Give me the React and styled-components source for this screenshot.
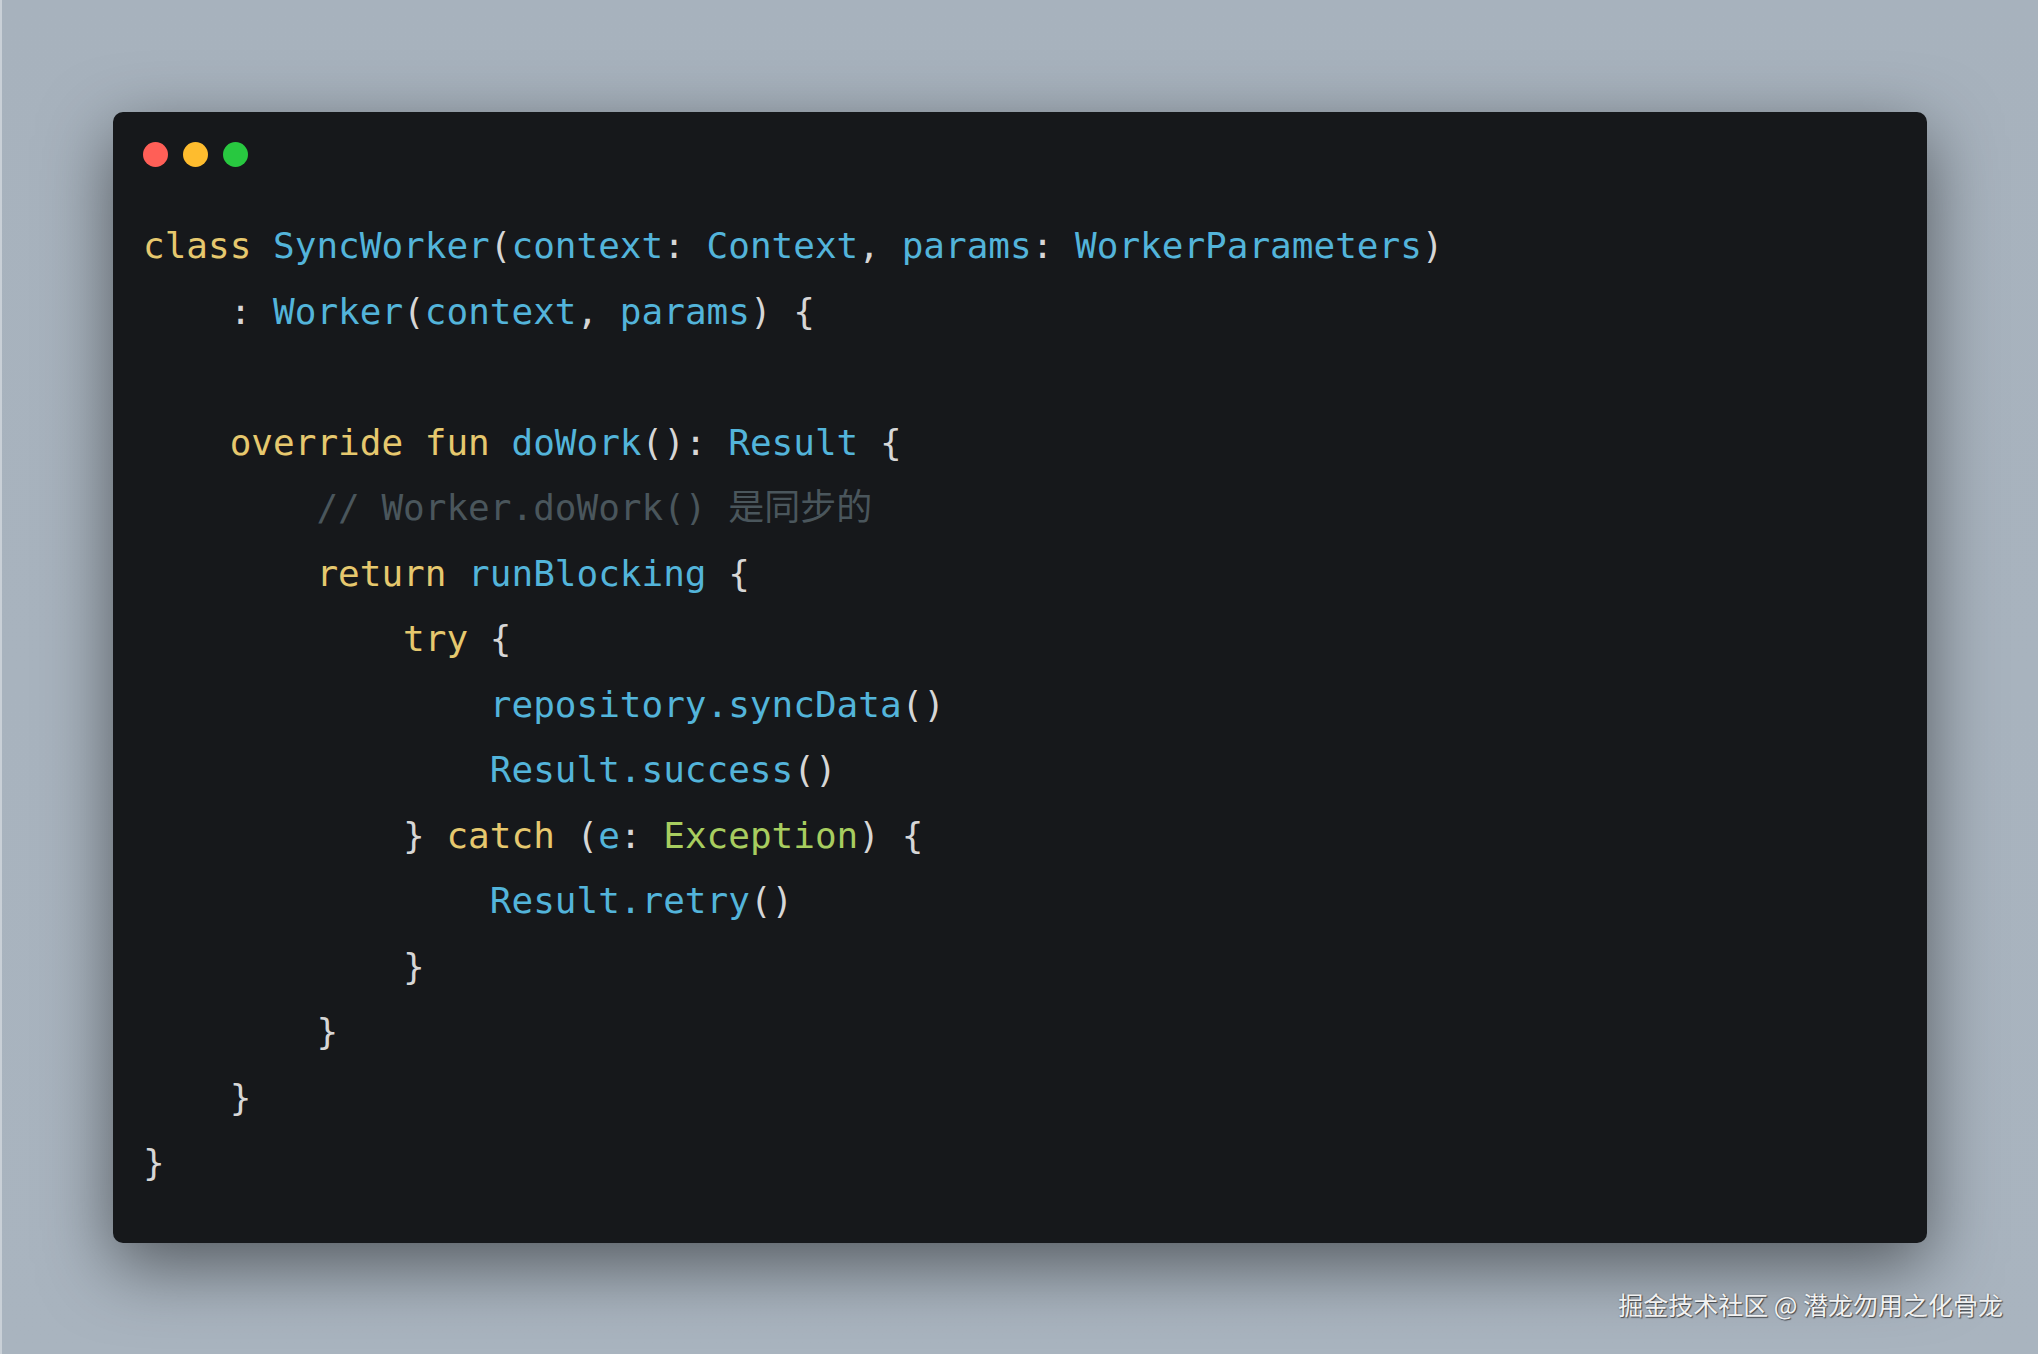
import React from "react";
import styled, { createGlobalStyle } from "styled-components";

const GlobalStyle = createGlobalStyle`
  html, body {
    margin: 0;
    padding: 0;
    background: #a8b3be;
  }
  body {
    border-left: 2px solid #c9d0d7;
    box-sizing: border-box;
  }
`;

const colors = {
  kw: "#e6c86e",
  id: "#53b4da",
  type: "#a8cd5f",
  com: "#4a565c",
  pun: "#d6d6d6",
};

const Page = styled.div`
  width: 100%;
  height: 1354px;
  box-sizing: border-box;
  padding: 112px 0 0 111px;
  display: flex;
  flex-direction: column;
  background: linear-gradient(180deg, #a7b2bd 0%, #a9b4bf 100%);
  overflow: hidden;
`;

const Window = styled.div`
  width: 1814px;
  height: 1131px;
  box-sizing: border-box;
  background: #16181b;
  border-radius: 10px;
  padding: 30px 32px 0 30px;
  box-shadow: 0 22px 70px rgba(0, 0, 0, 0.5);
`;

const TitleBar = styled.div`
  display: flex;
  gap: 15px;
  height: 25px;
`;

const Dot = styled.span`
  width: 25px;
  height: 25px;
  border-radius: 50%;
  background: ${(props) => props.color};
`;

const Code = styled.pre`
  margin: 46px 0 0 0;
  font-family: "DejaVu Sans Mono", "Noto Sans CJK SC", monospace;
  font-size: 36px;
  line-height: 65.5px;
  color: ${colors.pun};
`;

const Line = styled.div`
  height: 65.5px;
  white-space: pre;
`;

const Token = styled.span`
  color: ${(props) => colors[props.kind]};
`;

const Watermark = styled.div`
  align-self: flex-end;
  margin: 43px 35px 0 0;
  font-family: "Noto Sans CJK SC", "Noto Sans", sans-serif;
  font-size: 25px;
  color: #f2f2f2;
  text-shadow: 1px 1px 1px rgba(0, 0, 0, 0.55), 0 0 2px rgba(0, 0, 0, 0.3);
`;

const code = [
  [["kw", "class "], ["id", "SyncWorker"], ["pun", "("], ["id", "context"], ["pun", ": "], ["id", "Context"], ["pun", ", "], ["id", "params"], ["pun", ": "], ["id", "WorkerParameters"], ["pun", ")"]],
  [["pun", "    : "], ["id", "Worker"], ["pun", "("], ["id", "context"], ["pun", ", "], ["id", "params"], ["pun", ") {"]],
  [],
  [["kw", "    override fun "], ["id", "doWork"], ["pun", "(): "], ["id", "Result"], ["pun", " {"]],
  [["com", "        // Worker.doWork() 是同步的"]],
  [["kw", "        return "], ["id", "runBlocking"], ["pun", " {"]],
  [["kw", "            try"], ["pun", " {"]],
  [["id", "                repository.syncData"], ["pun", "()"]],
  [["id", "                Result.success"], ["pun", "()"]],
  [["pun", "            } "], ["kw", "catch"], ["pun", " ("], ["id", "e"], ["pun", ": "], ["type", "Exception"], ["pun", ") {"]],
  [["id", "                Result.retry"], ["pun", "()"]],
  [["pun", "            }"]],
  [["pun", "        }"]],
  [["pun", "    }"]],
  [["pun", "}"]],
];

export default function App() {
  return (
    <>
      <GlobalStyle />
      <Page>
        <Window>
          <TitleBar>
            <Dot color="#ff5f57" />
            <Dot color="#febc2e" />
            <Dot color="#28c840" />
          </TitleBar>
          <Code>
            {code.map((tokens, i) => (
              <Line key={i}>
                {tokens.map(([kind, text], j) => (
                  <Token key={j} kind={kind}>
                    {text}
                  </Token>
                ))}
              </Line>
            ))}
          </Code>
        </Window>
        <Watermark>掘金技术社区 @ 潜龙勿用之化骨龙</Watermark>
      </Page>
    </>
  );
}
